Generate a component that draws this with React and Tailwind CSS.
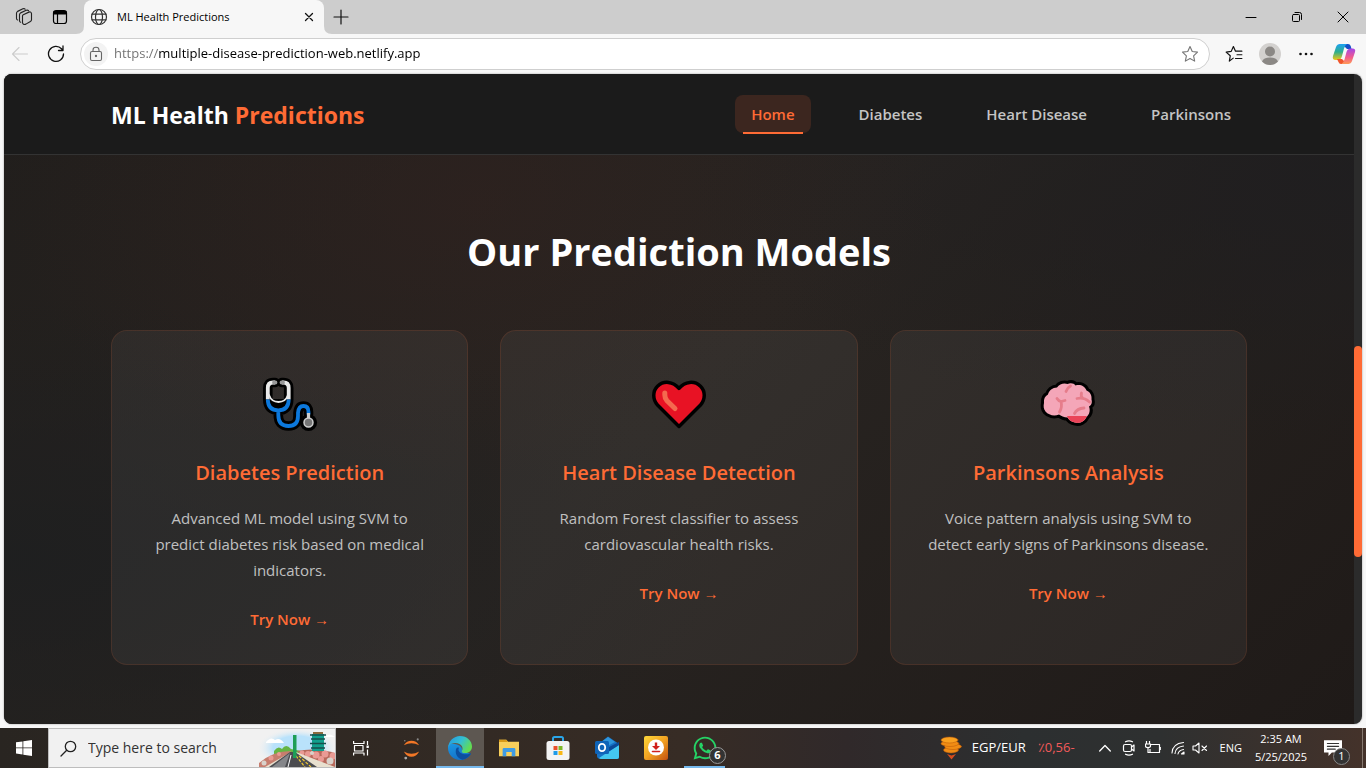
import React from "react";
import { FaWhatsapp } from "react-icons/fa";

function Svg({ box = 24, className, children, ...rest }) {
  return (
    <svg viewBox={`0 0 ${box} ${box}`} className={`shrink-0 ${className}`} fill="none" strokeLinecap="round" strokeLinejoin="round" aria-hidden="true" {...rest}>
      {children}
    </svg>
  );
}

/* ---------- card artwork ---------- */

function Stethoscope() {
  const tubes = "M17 10.500H15Q9.800 10.500 9.800 16V27.500M24 10.500H25.500Q30.700 10.500 30.700 16V27.500";
  const hose = "M9.800 27.500Q9.800 38.300 20.300 38.300Q30.700 38.300 30.700 27.500M20.300 38.500V43Q20.300 54 30.500 54Q40 54 40 44V41Q40.500 34 45.500 34Q50.500 34 50.500 40V42.500";
  return (
    <Svg box={64} className="size-16">
      <path d={tubes + hose} stroke="#000" strokeWidth="9.600" />
      <circle cx="50.500" cy="50.500" r="8.600" fill="#000" />
      <path d="M10.500 27Q11 36 20.500 36Q30 36 30.500 27Z" fill="#000" />
      <path d={tubes} stroke="#eaeaea" strokeWidth="3.800" strokeLinecap="butt" />
      <path d="M17.500 10.500h-1.500M23.500 10.500h1.500" stroke="#999" strokeWidth="3.800" />
      <path d="M11 23Q13.500 30 20.500 30Q27.500 30 30 23" stroke="#eaeaea" strokeWidth="1.800" />
      <path d={hose} stroke="#0c78dc" strokeWidth="3.800" strokeLinecap="butt" />
      <path d="M50.500 41V46" stroke="#ccc" strokeWidth="3.200" strokeLinecap="butt" />
      <circle cx="50.500" cy="50.500" r="4.500" fill="#757575" stroke="#cfcfcf" strokeWidth="1.500" />
    </Svg>
  );
}

function Heart() {
  return (
    <Svg box={64} className="size-16">
      <path d="M32 54.500L10.500 33C5.500 27.500 5.500 19 10.500 14.200C16.500 8.500 26 9 32 16.500C38 9 47.500 8.500 53.500 14.200C58.500 19 58.500 27.500 53.500 33Z" fill="#e81224" stroke="#000" strokeWidth="3.500" />
      <path d="M17.800 21V23Q17.800 26.500 20 28.800L28 36.500" stroke="#f4694f" strokeWidth="5" />
    </Svg>
  );
}

function Brain() {
  const shape = "M8 31C7.500 27 9 24 12 22.500C13 18.500 16.500 15.500 21 15.500C23.500 12 28 10.500 31.500 12C35 10.500 38 11.500 39.500 13.500C44 12 49 14 50.500 18.500C54.500 20 56 24 55.500 27.500C56.500 31 55 33.500 53 34.500C54.500 38.500 53.500 42.500 50.500 45C48.500 49.500 43.500 52 39 50.500C35 50 32.500 47.500 31.500 45.500C28 45.500 25 44 23 42.500C18 44.500 12.500 43 9.500 39.500C7.500 37 7.300 34 8 31Z";
  return (
    <Svg box={64} className="size-16">
      <path d={shape} fill="#f4a6b8" stroke="#000" strokeWidth="6" />
      <path d={shape} fill="#f4a6b8" />
      <path d="M31 44H51C48.500 49.500 43.500 52 39 50.500C35 50 32.500 47.500 31 44Z" fill="#ea4458" />
      <path d="M34.500 14Q31.500 15.500 30 19.500M21 26.500Q22.500 29 25 29.500Q26.500 35 23.500 40M29 28.500L25 29.500M41 26.500Q48 25 53.500 30M45.500 21Q44.500 24 47 26.500M38.500 41.500Q41 36.500 48 36" stroke="#e67d8b" strokeWidth="2.800" />
    </Svg>
  );
}

/* ---------- browser chrome ---------- */

function WindowFrame() {
  return (
    <header>
      <div className="flex h-[34px] items-center bg-[#cdcdcd]">
        <div className="flex w-21 shrink-0 items-center gap-[19px] pl-[15px]">
          <button aria-label="Workspaces">
            <Svg className="size-[18px]" stroke="#222" strokeWidth="1.500">
              <path d="M10 10.500Q10 9.500 11 9L18.500 5.500Q21.500 4.500 22 7.500V15.500Q22 17 20.500 18L14.500 21.500Q10.500 23 10 19.500ZM7.500 19Q6 18.500 6 16.500V9Q6 7.500 7.500 6.500L15 3Q17 2.500 18 3.500M3.500 16Q2 15.500 2 13.500V7Q2 5.500 3.500 4.500L10.500 1Q12.500 0.500 13.500 1.500" />
            </Svg>
          </button>
          <button aria-label="Tab actions">
            <Svg box={16} className="size-4" stroke="#000" strokeWidth="1.200">
              <rect x="1.500" y="1.500" width="13" height="13" rx="2.500" />
              <path d="M2 2.500H14V5H2Z" fill="#000" />
              <path d="M5.500 5V14" />
            </Svg>
          </button>
        </div>
        <div className="relative flex h-full w-60 shrink-0 items-center rounded-t-lg bg-[#f7f7f7] pr-2 pl-1.5">
          <Svg box={8} className="absolute bottom-0 -left-2 size-2"><path d="M8 0V8H0Q8 8 8 0Z" fill="#f7f7f7" /></Svg>
          <Svg box={8} className="absolute -right-2 bottom-0 size-2"><path d="M0 0V8H8Q0 8 0 0Z" fill="#f7f7f7" /></Svg>
          <Svg box={18} className="size-[18px]" stroke="#333" strokeWidth="1.200">
            <circle cx="9" cy="9" r="7.500" />
            <ellipse cx="9" cy="9" rx="3.500" ry="7.500" />
            <path d="M2 6.200H16M2 11.800H16" />
          </Svg>
          <span className="ml-[9px] grow text-[11px] leading-4 text-black">ML Health Predictions</span>
          <button aria-label="Close tab" className="p-0.5">
            <Svg box={10} className="size-2.5" stroke="#111" strokeWidth="1.300"><path d="M1.500 1.500L8.500 8.500M8.500 1.500L1.500 8.500" /></Svg>
          </button>
        </div>
        <button aria-label="New tab" className="ml-[9px]">
          <Svg box={16} className="size-4" stroke="#111" strokeWidth="1.200"><path d="M8 1V15M1 8H15" /></Svg>
        </button>
        <div className="ml-auto flex items-center">
          <button aria-label="Minimize" className="flex w-[46px] justify-center">
            <Svg box={12} className="size-3" stroke="#000"><path d="M1 6.500H11" /></Svg>
          </button>
          <button aria-label="Restore" className="flex w-[46px] justify-center">
            <Svg box={12} className="size-3" stroke="#000"><rect x="1.500" y="3.500" width="7" height="7" rx="1" /><path d="M4 1.500H8.500Q10.500 1.500 10.500 3.500V8.500" /></Svg>
          </button>
          <button aria-label="Close" className="flex w-[46px] justify-center">
            <Svg box={12} className="size-3" stroke="#000"><path d="M1 1L11 11M11 1L1 11" /></Svg>
          </button>
        </div>
      </div>

      <div className="flex h-10 items-center bg-[#f7f7f7] pr-2.5 pl-3">
        <button aria-label="Back">
          <Svg box={16} className="size-4" stroke="#ccc" strokeWidth="1.100"><path d="M15.500 8H0.800M7 1.500L0.500 8L7 14.500" /></Svg>
        </button>
        <button aria-label="Refresh" className="ml-[19px]">
          <Svg box={18} className="size-[18px]" stroke="#111" strokeWidth="1.300"><path d="M16.500 9A7.500 7.500 0 1 1 14.500 3.800L15.800 5.300M16 1V5.500H11.500" /></Svg>
        </button>
        <div className="ml-[15px] flex h-8 grow items-center rounded-full border border-[#cfcfcf] bg-white pr-2.5 pl-[3px]">
          <span className="flex size-6 items-center justify-center rounded-full bg-[#f3f3f3]">
            <Svg box={16} className="size-4" stroke="#666" strokeWidth="1.100">
              <rect x="2.500" y="5.500" width="11" height="9" rx="1.500" />
              <path d="M5 5.500V4Q5 1.200 8 1.200Q11 1.200 11 4V5.500" />
              <circle cx="8" cy="10" r="0.600" fill="#666" />
            </Svg>
          </span>
          <input
            aria-label="Address"
            defaultValue="https://multiple-disease-prediction-web.netlify.app"
            className="ml-1.5 min-w-0 grow bg-[linear-gradient(90deg,#6f6f6f_45px,#000_45px)] bg-clip-text text-[13px] text-transparent outline-none"
          />
          <button aria-label="Add to favorites">
            <Svg className="size-[18px]" stroke="#777" strokeWidth="1.500"><path d="M12 2L15 8.700L22 9.500L16.800 14.400L18.200 21.500L12 18L5.800 21.500L7.200 14.400L2 9.500L9 8.700Z" /></Svg>
          </button>
        </div>
        <button aria-label="Favorites" className="ml-[15px]">
          <Svg className="size-[18px]" stroke="#111" strokeWidth="1.600"><path d="M11 17.500L5.800 21.500L7 14.400L1.500 9.500L8.300 8.500L11.200 2L14 8.200H22.500M16 13H22.500M14 18H22.500" /></Svg>
        </button>
        <button aria-label="Profile" className="ml-4">
          <Svg box={22} className="size-[22px]">
            <circle cx="11" cy="11" r="11" fill="#d3d1cf" />
            <circle cx="11" cy="8.500" r="5" fill="#8b8885" />
            <path d="M3 18.500Q4.500 14.500 11 14.500Q17.500 14.500 19 18.500Q15.500 22 11 22Q6.500 22 3 18.500Z" fill="#8b8885" />
          </Svg>
        </button>
        <button aria-label="Settings and more" className="ml-[18px]">
          <Svg box={14} className="size-3.5" fill="#111"><circle cx="1.500" cy="7" r="1.300" /><circle cx="7" cy="7" r="1.300" /><circle cx="12.500" cy="7" r="1.300" /></Svg>
        </button>
        <button aria-label="Copilot" className="ml-[19px]">
          <Svg box={24} className="size-6">
            <defs>
              <linearGradient id="cpA" x1="0" y1="0" x2="0" y2="1"><stop offset="0" stopColor="#1da1f2" /><stop offset=".5" stopColor="#2fae8c" /><stop offset="1" stopColor="#f2c715" /></linearGradient>
              <linearGradient id="cpB" x1="0" y1="0" x2="0" y2="1"><stop offset="0" stopColor="#a347e8" /><stop offset=".55" stopColor="#f0598f" /><stop offset="1" stopColor="#ff9a55" /></linearGradient>
            </defs>
            <path d="M7 2H16Q18 2 18.700 4L19.500 7H15L13 5Z" fill="#1450c8" />
            <path d="M8 2H15Q13 3 12 6.500L10 14Q9 18 6 18H3.500Q0 18 1 14L4 5Q5 2 8 2Z" fill="url(#cpA)" />
            <path d="M5 17H10L12 19L17 22H9Q7 22 6.500 20Z" fill="#f0562c" />
            <path d="M16 22H9.500Q11.500 21 12.500 17.500L14.500 10Q15.500 6.500 18.500 6.500H20.500Q24 6.500 23 10L20 19Q19 22 16 22Z" fill="url(#cpB)" />
          </Svg>
        </button>
      </div>
    </header>
  );
}

/* ---------- web page ---------- */

const links = ["Diabetes", "Heart Disease", "Parkinsons"];

const models = [
  { title: "Diabetes Prediction", text: "Advanced ML model using SVM to predict diabetes risk based on medical indicators.", Icon: Stethoscope },
  { title: "Heart Disease Detection", text: "Random Forest classifier to assess cardiovascular health risks.", Icon: Heart },
  { title: "Parkinsons Analysis", text: "Voice pattern analysis using SVM to detect early signs of Parkinsons disease.", Icon: Brain },
];

function Page() {
  return (
    <div className="mx-1 flex grow overflow-hidden rounded-lg bg-[#2b2b2b] shadow-[0_0_2px_rgba(0,0,0,0.4)]">
      <div className="flex grow flex-col bg-[radial-gradient(ellipse_at_35%_20%,rgba(60,34,30,0.3),transparent_38%),radial-gradient(ellipse_at_0%_75%,rgba(30,31,32,0.9),transparent_38%),radial-gradient(ellipse_at_100%_15%,rgba(31,30,32,0.9),transparent_35%),linear-gradient(135deg,#211e1c,#282421_50%,#1f1a18)]">
        <div className="border-b border-[#333] bg-[#1b1b1b]">
          <div className="mx-auto flex h-20 max-w-[1200px] items-center justify-between px-8">
            <a href="#home" className="pt-0.5 text-[23px] leading-8 font-bold text-white">
              ML Health <span className="text-[#ff6b35]">Predictions</span>
            </a>
            <nav className="flex gap-8 text-[15px] leading-[22px] font-semibold text-[#c4c4c4]">
              <a href="#home" className="relative rounded-lg bg-[#3c261f] px-4 py-2 text-[#ff6b35]">
                Home
                <span className="absolute inset-x-2 -bottom-px h-0.5 bg-[#ff6b35]" />
              </a>
              {links.map((l) => (
                <a key={l} href={"#" + l} className="px-4 py-2">{l}</a>
              ))}
            </nav>
          </div>
        </div>

        <main className="mx-auto w-full max-w-[1200px] px-8 pt-16">
          <h2 className="text-center text-[38px] leading-16 font-bold text-white">Our Prediction Models</h2>
          <div className="mt-[47px] grid grid-cols-3 gap-8">
            {models.map(({ title, text, Icon }) => (
              <article key={title} className="rounded-2xl border border-[#ff6b35]/12 bg-white/5 px-[34px] py-8 text-center">
                <div className="flex h-[82px] items-center justify-center"><Icon /></div>
                <h3 className="mt-2.5 text-xl leading-9 font-semibold text-[#ff6b35]">{title}</h3>
                <p className="mt-3.5 text-[15px] leading-[26px] text-[#c0c0c0]">{text}</p>
                <a href={"#" + title} className="mt-[23px] inline-block text-[15px] leading-[26px] font-semibold text-[#ff6b35]">Try Now →</a>
              </article>
            ))}
          </div>
        </main>
      </div>
      <div className="flex w-2 shrink-0 flex-col">
        <div className="grow-[272]" />
        <div className="grow-[211] rounded-full bg-[#ff6b35]" />
        <div className="grow-[167]" />
      </div>
    </div>
  );
}

/* ---------- taskbar ---------- */

function SearchArt() {
  return (
    <svg viewBox="0 0 76 38" className="h-full w-[76px] shrink-0" aria-hidden="true">
      <defs><radialGradient id="sky"><stop offset=".6" stopColor="#b9e2fb" /><stop offset="1" stopColor="#f1f1f1" stopOpacity="0" /></radialGradient></defs>
      <ellipse cx="38" cy="19" rx="40" ry="20" fill="url(#sky)" />
      <path d="M7 13Q12 7 16 11Q21 8 25 14H7ZM66 8Q70 3 76 8Z" fill="#fff" />
      <path d="M15 22Q19 16 23 20Q27 14 32 20L42 22V26H15Z" fill="#65b544" />
      <path d="M0 38V34Q14 22 32 22L24 38Z" fill="#c77d6e" />
      <path d="M38 22Q56 18 76 24V38H60Z" fill="#b8695b" />
      <g fill="#e99a94"><circle cx="43" cy="24" r="2.500" /><circle cx="49" cy="25" r="3" /><circle cx="57" cy="26" r="3.500" /><circle cx="66" cy="25" r="3.500" /><circle cx="74" cy="27" r="3.500" /><circle cx="62" cy="30" r="3" /><circle cx="12" cy="29" r="2.500" /><circle cx="20" cy="25" r="2" /></g>
      <g fill="#d9d2cb"><circle cx="71" cy="32" r="3.500" /><circle cx="53" cy="24" r="2" /><circle cx="5" cy="34" r="2.500" /></g>
      <path d="M6 38L32 23H37L76 38Z" fill="#e8e0cf" />
      <path d="M10 38L31 23H36L58 38Z" fill="#4b4c50" />
      <path d="M13 38L31 24L26 38Z" fill="#85868a" />
      <path d="M37 27L46 38M40 27L52 38" stroke="#f4cb2d" strokeWidth="1.200" strokeDasharray="3 1.500" />
      <path d="M32 26L29 38" stroke="#fff" strokeWidth="1" />
      <path d="M34 6H37.500V29H34Z" fill="#1d9e57" />
      <path d="M53 5H65V22H53Z" fill="#12a08d" />
      <path d="M51 6H67M52 10H66M51 14.500H67M52 19H66" stroke="#194f4c" strokeWidth="1.300" />
      <path d="M54 3H64V5H54Z" fill="#8b6a3e" />
    </svg>
  );
}

function Taskbar() {
  const app = "relative flex w-[49px] shrink-0 items-center justify-center";
  return (
    <footer className="mt-1 flex h-10 bg-[linear-gradient(90deg,#292521,#372c25_50%,#30292a_62%,#2c2f30_75%,#2e3030_85%,#44322a)] text-white">
      <button aria-label="Start" className="flex w-12 shrink-0 items-center justify-center">
        <Svg box={16} className="size-4" fill="#fff"><path d="M0 2.300L6.500 1.400V7.500H0ZM7.300 1.300L16 0V7.500H7.300ZM0 8.300H6.500V14.500L0 13.600ZM7.300 8.300H16V16L7.300 14.700Z" /></Svg>
      </button>
      <label className="flex w-72 shrink-0 items-center border border-[#bdbdbd] bg-[#f1f1f1] pl-[11px]">
        <Svg box={17} className="size-[17px]" stroke="#222" strokeWidth="1.300"><circle cx="10.500" cy="6.500" r="5.200" /><path d="M6.700 10.300L1 16" /></Svg>
        <input aria-label="Search" placeholder="Type here to search" className="ml-[11px] w-0 grow text-sm text-black outline-none placeholder:text-[#333]" />
        <SearchArt />
      </label>
      <button aria-label="Task view" className={app}>
        <Svg box={16} className="size-4" stroke="#fff" strokeWidth="1.200" strokeLinecap="butt">
          <path d="M0.600 1V3.500H11V1M0.600 15.500V13H11V15.500M1.500 5.500H10V11H1.500ZM14.500 1V5M14.500 9.500V15.500" /><path d="M13.500 5.500H15.800V8H13.500Z" fill="#fff" stroke="none" />
        </Svg>
      </button>
      <button aria-label="Jupyter" className={app + " pl-1"}>
        <Svg className="size-[23px]">
          <path d="M4 8.500Q7 4 12 4Q17 4 20 8.500Q16 6.500 12 6.500Q8 6.500 4 8.500ZM4 15Q8 17.500 12 17.500Q16 17.500 20 15Q17 20.500 12 20.500Q7 20.500 4 15Z" fill="#f37726" />
          <circle cx="18.500" cy="2.500" r="1.100" fill="#888" /><circle cx="6" cy="22" r="1.500" fill="#aaa" /><circle cx="5" cy="4" r=".8" fill="#888" />
        </Svg>
      </button>
      <button aria-label="Edge" className="relative ml-0.5 flex w-12 shrink-0 items-center justify-center bg-[#5d5751]">
        <Svg box={24} className="size-6">
          <defs>
            <linearGradient id="egA" x1="0" y1="0" x2="1" y2=".5"><stop offset="0" stopColor="#2496e0" /><stop offset=".55" stopColor="#33bfd4" /><stop offset="1" stopColor="#62dc52" /></linearGradient>
            <linearGradient id="egB" x1="0" y1="0" x2=".4" y2="1"><stop offset="0" stopColor="#1b98e4" /><stop offset="1" stopColor="#1572c8" /></linearGradient>
          </defs>
          <path d="M0 12C0 7 5 7 9 8.500C12.500 9.500 14.500 12 14 14.700L22.800 18C20.500 22 16.500 24 12 24C5.400 24 0 18.600 0 12Z" fill="url(#egB)" />
          <path d="M8.300 12.500C6.500 17 9 22.500 14.500 23.800C18.500 23 21.500 20.500 22.900 18C23.200 17.300 22.600 17 22 17.400C20 18.500 17.500 18.600 15 18C11.500 17 9.500 14.800 11 11.800C10 11 8.800 11.500 8.300 12.500Z" fill="#0c4f9f" />
          <path d="M0.100 11.500C0.500 5 5.800 0 12 0C19 0 24 5 24 10.500C24 14.500 21 17 17.500 17C14.500 17 13.300 15.800 13.800 14.900C15.300 13 14.500 9.500 11.500 8C8 6.200 2 6.500 0.100 11.500Z" fill="url(#egA)" />
        </Svg>
        <span className="absolute inset-x-0 bottom-0 h-0.5 bg-[#76b9ed]" />
      </button>
      <button aria-label="File Explorer" className={app}>
        <Svg box={22} className="h-5 w-[22px]">
          <path d="M0 2H8L10 4H22V20H0Z" fill="#f8cf5b" /><path d="M0 2H8L10 4.500H0Z" fill="#d89a19" /><path d="M4 12.500Q4 11 5.500 11H16.500Q18 11 18 12.500V20H14V15.500H8V20H4Z" fill="#3f9be3" />
        </Svg>
      </button>
      <button aria-label="Microsoft Store" className={app}>
        <Svg className="size-6">
          <path d="M7 6V2.500Q7 1 8.500 1H15.500Q17 1 17 2.500V6" stroke="#2aa5e8" strokeWidth="2" />
          <rect x="0.500" y="5" width="23" height="19" rx="2.500" fill="#f3f3f3" />
          <path d="M7.500 10H11.500V14H7.500Z" fill="#e9502b" /><path d="M12.500 10H16.500V14H12.500Z" fill="#7db928" /><path d="M7.500 15H11.500V19H7.500Z" fill="#1f9be8" /><path d="M12.500 15H16.500V19H12.500Z" fill="#f8b714" />
        </Svg>
      </button>
      <button aria-label="Outlook" className={app}>
        <Svg className="size-6">
          <path d="M2 9L13 0.500L24 8V21Q24 23 22 23H6Q2 23 2 20Z" fill="#1572c6" /><path d="M5 7L13 1L20 6L9 12Z" fill="#3aa5e6" opacity=".7" /><path d="M24 9V21Q24 23 22 23H6Q5 23 4 22Z" fill="#44c8f0" /><path d="M13 16L24 9V6L12 12Z" fill="#0b4a98" />
          <rect x="0" y="5" width="14" height="13" rx="1.500" fill="#0f64b8" /><ellipse cx="7" cy="11.500" rx="3.200" ry="3.700" stroke="#fff" strokeWidth="1.800" />
        </Svg>
      </button>
      <button aria-label="Downloader" className={app}>
        <Svg className="size-6">
          <defs><linearGradient id="dl" x1="0" y1="0" x2="1" y2="1"><stop offset="0" stopColor="#ffd83a" /><stop offset=".5" stopColor="#f3a322" /><stop offset="1" stopColor="#c2500f" /></linearGradient></defs>
          <rect width="24" height="24" rx="2" fill="url(#dl)" /><circle cx="12" cy="11.500" r="8" fill="#fff" />
          <path d="M10.800 6.500H13.200V10H16L12 14L8 10H10.800Z" fill="#d0201c" /><path d="M8.500 15.500H15.500" stroke="#d0201c" strokeWidth="1.600" />
        </Svg>
      </button>
      <button aria-label="WhatsApp, 6 notifications" className={app}>
        <FaWhatsapp className="size-[26px] text-[#25d366]" />
        <span className="absolute right-[3px] bottom-1 flex size-[17px] items-center justify-center rounded-full border border-[#999] bg-[#333] text-[11px] font-bold">6</span>
        <span className="absolute inset-x-1 bottom-0 h-0.5 bg-[#76b9ed]" />
      </button>

      <div className="ml-auto flex items-center">
        <Svg className="h-6 w-[24px]">
          <g fill="#f08c14" stroke="#b95708" strokeWidth=".5"><ellipse cx="12" cy="14" rx="7.500" ry="3" /><ellipse cx="14" cy="10.500" rx="8.500" ry="3" /><ellipse cx="11" cy="7.500" rx="9" ry="3" /><ellipse cx="10.500" cy="4" rx="8.500" ry="3" fill="#f9a01f" /></g>
          <path d="M8 18L12.500 19.500L17 18L12.500 23.500Z" fill="#d84e1d" />
        </Svg>
        <span className="ml-[9px] text-[13px]">EGP/EUR</span>
        <span className="ml-3 text-[13px] text-[#f25a5a]">٪0,56-</span>
        <button aria-label="Show hidden icons" className="ml-6"><Svg box={12} className="size-3" stroke="#fff" strokeWidth="1.300"><path d="M0.700 9L6 3.500L11.300 9" /></Svg></button>
        <Svg box={16} className="ml-2.5 size-4" stroke="#fff" strokeWidth="1.200"><rect x="2.500" y="4.500" width="8" height="7" rx="1.500" /><path d="M10.500 7L13 5V11L10.500 9M4.500 1.800Q8 0 11.500 1.800M4.500 14.200Q8 16 11.500 14.200" /></Svg>
        <Svg box={16} className="ml-2 size-4" stroke="#fff" strokeWidth="1.200" strokeLinecap="butt"><path d="M5.500 4.500H14.500V12.500H5V9M15.300 7V10M1.500 1V4M4.500 1V4M0.500 4H5.500V6Q5.500 7.500 3 7.500Q0.500 7.500 0.500 6ZM3 7.500V12.500H5" /></Svg>
        <Svg box={14} className="ml-2.5 size-3.5" stroke="#fff" strokeWidth="1.100"><path d="M1 12Q1.500 2.500 12.500 1.500M4 12.500Q4.500 6 12.500 5M7 13Q7.500 9.500 12.500 8.500" /><path d="M10.500 13L13 13V11Z" fill="#fff" /></Svg>
        <Svg box={16} className="ml-[7px] size-4" stroke="#fff" strokeWidth="1.100"><path d="M1 6V10H3.500L7 13V3L3.500 6ZM10 6L14.500 10.500M14.500 6L10 10.500" /></Svg>
        <span className="ml-3 text-[11px]">ENG</span>
        <div className="ml-3 w-[54px] text-center text-[11px] leading-[18px] whitespace-nowrap">
          <div>2:35 AM</div>
          <div>5/25/2025</div>
        </div>
        <button aria-label="1 notification" className="relative ml-4 flex">
          <Svg box={16} className="size-[18px]"><path d="M0 1H16V12H7L4 15V12H0Z" fill="#fff" /><path d="M3 4H13M3 6.500H13M3 9H10" stroke="#333" strokeWidth="1" /></Svg>
          <span className="absolute -right-2 -bottom-2 flex size-[17px] items-center justify-center rounded-full border border-[#888] bg-[#333] text-[11px]">1</span>
        </button>
        <span className="ml-5 h-10 w-1 border-l border-[#85786f]" />
      </div>
    </footer>
  );
}

export default function App() {
  return (
    <div className="flex min-h-screen flex-col bg-[#f7f7f7] font-['Open_Sans','Noto_Sans',sans-serif]">
      <WindowFrame />
      <Page />
      <Taskbar />
    </div>
  );
}
